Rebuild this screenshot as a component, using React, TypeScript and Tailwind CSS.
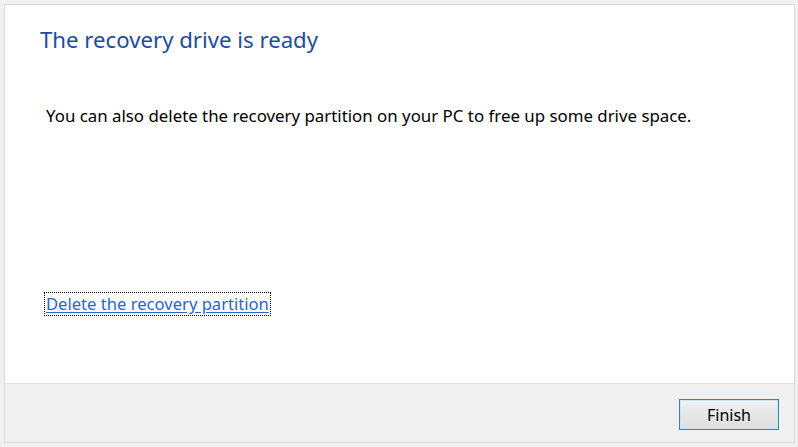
import React from "react";

export default function App() {
  return (
    <div
      className="w-[798px] h-[447px] bg-[#f0f0f0] pt-[4px] pb-[4px] pl-[4px] pr-[3px]"
      style={{ fontFamily: '"Noto Sans", "Open Sans", sans-serif' }}
    >
      <div className="h-full flex flex-col border border-[#dadada]">
        <div className="flex-1 bg-white flex flex-col pl-[35px] pt-[21px]">
          <h1 className="text-[22.2px] leading-[28px] text-[#1e4c9a] font-normal">
            The recovery drive is ready
          </h1>
          <p className="mt-[51px] ml-[6px] text-[16.85px] leading-[22px] text-black">
            You can also delete the recovery partition on your PC to free up some drive space.
          </p>
          <div className="mt-[165px] ml-[5px]">
            <a
              href="#"
              className="inline-block outline-1 outline-dotted outline-black px-[1px] text-[16.6px] leading-[22px] text-[#2a66c4] underline underline-offset-2"
            >
              Delete the recovery partition
            </a>
          </div>
        </div>
        <div className="h-[59px] bg-[#f0f0f0] border-t border-[#dfdfdf] flex justify-end items-start pt-[15px] pr-[15px]">
          <button className="w-[100px] h-[31px] border border-[#3c7fb1] shadow-[inset_0_0_0_1px_#c8e6f8] bg-gradient-to-b from-[#f0f0f0] to-[#dedede] text-[16px] text-black">
            Finish
          </button>
        </div>
      </div>
    </div>
  );
}
